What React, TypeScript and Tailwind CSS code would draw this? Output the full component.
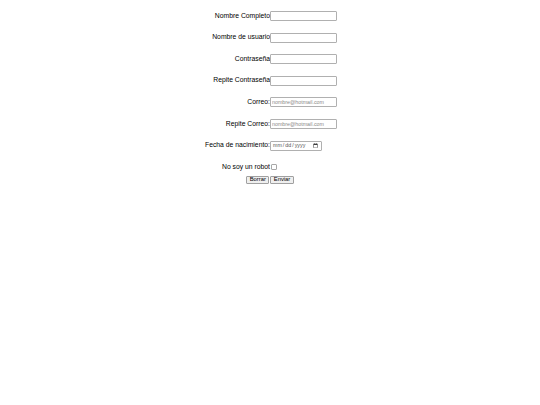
import React from 'react';

const font = { fontFamily: '"Liberation Sans", Arial, sans-serif' };

const Row: React.FC<{ label: string; children: React.ReactNode }> = ({ label, children }) => (
  <div className="grid grid-cols-2 items-center h-[10px] mb-[11.6px]">
    <label className="text-right text-[6.8px] leading-none text-black whitespace-nowrap">{label}</label>
    <div className="flex items-center">{children}</div>
  </div>
);

const textInput = 'w-[67px] h-[10px] border border-[#b0b0b0] rounded-[1px] bg-white px-[1px] text-[5.3px] outline-none placeholder:text-[#8a8a8a]';
const btn = 'h-[8.5px] px-[2.5px] text-[5.8px] leading-none text-black bg-[#efefef] border border-[#a0a0a0] rounded-[1px]';

export default function App() {
  return (
    <div className="w-[540px] h-[405px] bg-white pt-[11px]" style={font}>
      <Row label="Nombre Completo">
        <input type="text" className={textInput} />
      </Row>
      <Row label="Nombre de usuario">
        <input type="text" className={textInput} />
      </Row>
      <Row label="Contraseña">
        <input type="password" className={textInput} />
      </Row>
      <Row label="Repite Contraseña">
        <input type="password" className={textInput} />
      </Row>
      <Row label="Correo:">
        <input type="email" placeholder="nombre@hotmail.com" className={textInput + ' h-[9px]'} />
      </Row>
      <Row label="Repite Correo:">
        <input type="email" placeholder="nombre@hotmail.com" className={textInput + ' h-[9px]'} />
      </Row>
      <Row label="Fecha de nacimiento:">
        <input type="date" className="w-[52px] h-[10px] border border-[#b0b0b0] rounded-[1px] bg-white px-[1px] text-[5.3px] text-[#555] outline-none" />
      </Row>
      <div className="grid grid-cols-2 items-center h-[10px] mb-[3.5px]">
        <label className="text-right text-[6.8px] leading-none text-black">No soy un robot</label>
        <div className="flex items-center">
          <input type="checkbox" className="appearance-none w-[6px] h-[6px] m-0 ml-[1px] border border-[#a8a8a8] rounded-[1px] bg-white" />
        </div>
      </div>
      <div className="flex justify-center gap-[1px]">
        <button className={btn}>Borrar</button>
        <button className={btn}>Enviar</button>
      </div>
    </div>
  );
}
